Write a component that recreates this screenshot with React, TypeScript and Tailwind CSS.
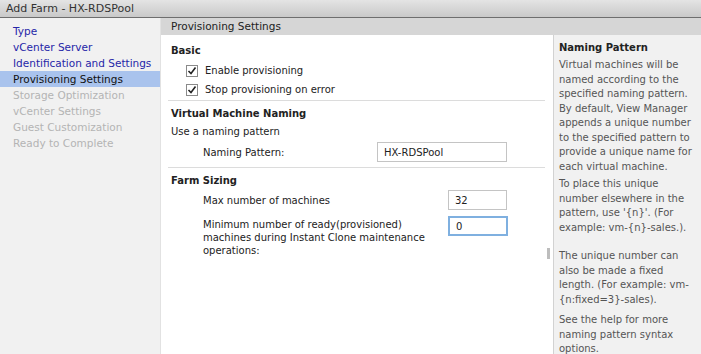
const navItems = [
  { label: "Type", state: "link" },
  { label: "vCenter Server", state: "link" },
  { label: "Identification and Settings", state: "link" },
  { label: "Provisioning Settings", state: "active" },
  { label: "Storage Optimization", state: "off" },
  { label: "vCenter Settings", state: "off" },
  { label: "Guest Customization", state: "off" },
  { label: "Ready to Complete", state: "off" },
]

const helpParas = [
  { lines: ["Virtual machines will be", "named according to the", "specified naming pattern.", "By default, View Manager", "appends a unique number", "to the specified pattern to", "provide a unique name for", "each virtual machine."], gap: "mt-0" },
  { lines: ["To place this unique", "number elsewhere in the", "pattern, use '{n}'. (For", "example: vm-{n}-sales.)."], gap: "mt-[3px]" },
  { lines: ["The unique number can", "also be made a fixed", "length. (For example: vm-", "{n:fixed=3}-sales)."], gap: "mt-[14px]" },
  { lines: ["See the help for more", "naming pattern syntax", "options."], gap: "mt-[6px]" },
]

function Check() {
  return (
    <span className="flex h-[12px] w-[12px] items-center justify-center border border-[#8a8a8a] bg-white">
      <svg width="10" height="10" viewBox="0 0 10 10">
        <path d="M1.5 5 L4 7.5 L8.5 1.5" fill="none" stroke="#222" strokeWidth="1.6" />
      </svg>
    </span>
  )
}

function Field({ value, width, focus }: { value: string; width: string; focus?: boolean }) {
  return (
    <div
      className={`${width} h-[20px] flex items-center px-[6px] bg-white ${
        focus ? "border-2 border-[#7fb0e0]" : "border border-[#c4c4c4]"
      }`}
    >
      {value}
    </div>
  )
}

export default function App() {
  return (
    <div className="w-[701px] h-[354px] overflow-hidden flex flex-col bg-white text-[10px] leading-[15px] text-[#222] [font-family:'DejaVu_Sans',Verdana,sans-serif]">
      {/* window title */}
      <div className="h-[18px] shrink-0 flex items-center pl-[6px] text-[11px] text-[#333] bg-gradient-to-b from-[#e4e4e4] to-[#c9c9c9] border-b border-[#6e6e6e]">
        Add Farm - HX-RDSPool
      </div>

      <div className="flex flex-1 min-h-0">
        {/* steps */}
        <div className="w-[161px] shrink-0 bg-[#f1f1f1] border-r border-[#e2e2e2] pt-[5px]">
          {navItems.map((item) => (
            <div
              key={item.label}
              className={`h-[16px] flex items-center pl-[13px] text-[10.5px] ${
                item.state === "active"
                  ? "bg-[#a9c3ed] text-[#111]"
                  : item.state === "link"
                  ? "text-[#2626a8]"
                  : "text-[#b4b4b4]"
              }`}
            >
              {item.label}
            </div>
          ))}
        </div>

        <div className="flex-1 flex flex-col min-w-0">
          <div className="h-[17px] shrink-0 flex items-center pl-[10px] bg-[#d6d6d6] text-[10.5px] text-[#222]">
            Provisioning Settings
          </div>

          <div className="flex flex-1 min-h-0">
            {/* form */}
            <div className="w-[392px] shrink-0 relative pl-[7px] pr-[8px]">
              <div className="pl-[3px] pt-[8px] font-bold">Basic</div>
              <div className="flex items-center gap-[7px] pl-[18px] mt-[5px]">
                <Check />
                <span>Enable provisioning</span>
              </div>
              <div className="flex items-center gap-[7px] pl-[18px] mt-[4px]">
                <Check />
                <span>Stop provisioning on error</span>
              </div>
              <div className="mt-[3px] border-t border-[#dcdcdc]" />

              <div className="pl-[3px] pt-[5px] font-bold">Virtual Machine Naming</div>
              <div className="pl-[3px] mt-[3px]">Use a naming pattern</div>
              <div className="flex items-center pl-[35px] mt-[3px]">
                <span className="w-[174px]">Naming Pattern:</span>
                <Field value="HX-RDSPool" width="w-[130px]" />
              </div>
              <div className="mt-[5px] border-t border-[#dcdcdc]" />

              <div className="pl-[3px] pt-[5px] font-bold">Farm Sizing</div>
              <div className="flex items-center pl-[35px] mt-[2px]">
                <span className="w-[245px]">Max number of machines</span>
                <Field value="32" width="w-[59px]" />
              </div>
              <div className="flex items-start pl-[35px] mt-[6px]">
                <span className="w-[245px] leading-[13px] pt-[2px]">
                  Minimum number of ready(provisioned) machines during Instant Clone maintenance operations:
                </span>
                <Field value="0" width="w-[60px]" focus />
              </div>

              {/* scroll grip */}
              <div className="absolute right-[3px] top-[213px] w-[3px] h-[11px] bg-[#bdbdbd]" />
            </div>

            {/* help */}
            <div className="flex-1 bg-[#f1f1f1] border-l border-[#d2d2d2] pl-[5px] pt-[6px] text-[#555]">
              <div className="font-bold text-[#222] leading-[14px]">Naming Pattern</div>
              <div className="mt-[3px]">
                {helpParas.map((p, i) => (
                  <div key={i} className={p.gap}>
                    {p.lines.map((line) => (
                      <div key={line} className="leading-[14.5px] whitespace-nowrap">
                        {line}
                      </div>
                    ))}
                  </div>
                ))}
              </div>
            </div>
          </div>
        </div>
      </div>
    </div>
  )
}
